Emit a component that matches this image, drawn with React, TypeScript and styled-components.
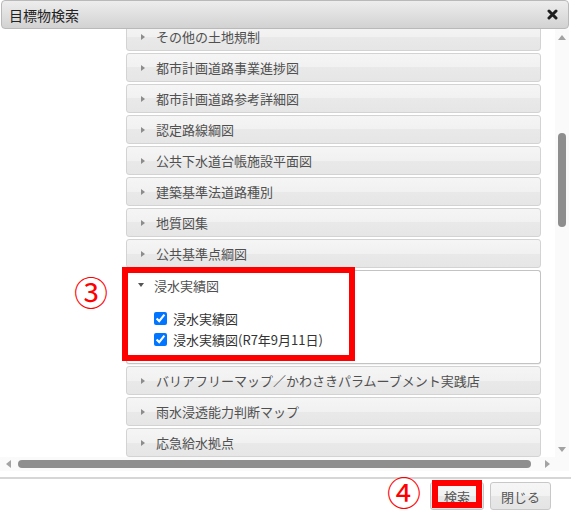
import React, { useLayoutEffect, useRef } from "react";
import styled, { createGlobalStyle } from "styled-components";

const GlobalStyle = createGlobalStyle`
  html, body { margin: 0; padding: 0; background: #fff; }
  body { font-family: "Noto Sans CJK JP", "Noto Sans", sans-serif; }
  * { box-sizing: border-box; }
`;

const Dialog = styled.div`
  position: relative;
  width: 571px;
  height: 514px;
  display: flex;
  flex-direction: column;
  background: #fff;
`;

const TitleBar = styled.div`
  height: 29px;
  margin: 0 2px 0 1px;
  padding: 0 10px 0 7px;
  display: flex;
  align-items: center;
  justify-content: space-between;
  border: 1px solid #b9b9b9;
  border-radius: 4px;
  background: linear-gradient(#ededed, #d2d2d2);
  color: #222;
  font-size: 14px;
`;

const Body = styled.div`
  display: grid;
  grid-template-columns: 555px 14px;
  grid-template-rows: 428px 14px;
`;

const Viewport = styled.div`
  overflow: hidden;
`;

const List = styled.div`
  display: flex;
  flex-direction: column;
  padding: 0 14px 2px 126px;
`;

const Item = styled.div`
  margin-top: 2px;
`;

const Header = styled.div<{ $open?: boolean }>`
  height: 29px;
  display: flex;
  align-items: center;
  gap: 10px;
  padding-left: ${(p) => (p.$open ? "10px" : "12px")};
  border: 1px solid ${(p) => (p.$open ? "#c3c3c3" : "#d3d3d3")};
  border-bottom: ${(p) => (p.$open ? "none" : "1px solid #d3d3d3")};
  border-radius: ${(p) => (p.$open ? "3px 3px 0 0" : "3px")};
  background: ${(p) =>
    p.$open
      ? "#fff"
      : "linear-gradient(#f5f5f5 0%, #f1f1f1 50%, #e9e9e9 50%, #e6e6e6 100%)"};
  color: #505050;
  font-size: 13px;
  white-space: nowrap;
`;

const Caret = styled.span<{ $open?: boolean }>`
  width: 0;
  height: 0;
  flex: none;
  margin-left: ${(p) => (p.$open ? "1px" : "2px")};
  margin-right: ${(p) => (p.$open ? "0" : "1px")};
  ${(p) =>
    p.$open
      ? `border-left: 3px solid transparent; border-right: 3px solid transparent; border-top: 4px solid #555;`
      : `border-top: 3.5px solid transparent; border-bottom: 3.5px solid transparent; border-left: 4px solid #8c8c8c;`}
`;

const Panel = styled.div`
  padding: 9px 0 13px 27px;
  border: 1px solid #c3c3c3;
  border-top: none;
  border-radius: 0 0 3px 3px;
  background: #fff;
  box-shadow: 0 1px 1px rgba(0, 0, 0, 0.06);
`;

const CheckRow = styled.label`
  height: 21px;
  display: flex;
  align-items: center;
  gap: 6px;
  color: #333;
  font-size: 13px;
  white-space: nowrap;
`;

const Check = styled.input`
  width: 13px;
  height: 13px;
  margin: 0;
  accent-color: #0075ff;
`;

const VTrack = styled.div`
  display: flex;
  flex-direction: column;
  align-items: center;
  background: #fafafa;
`;

const HTrack = styled.div`
  display: flex;
  align-items: center;
  background: #fafafa;
`;

const Corner = styled.div`
  background: #fafafa;
`;

const ArrowBox = styled.div`
  width: 16px;
  height: 16px;
  flex: none;
  display: flex;
  align-items: center;
  justify-content: center;
`;

const Arrow = styled.span<{ $dir: "up" | "down" | "left" | "right" }>`
  width: 0;
  height: 0;
  ${(p) =>
    p.$dir === "up"
      ? "border-left: 4px solid transparent; border-right: 4px solid transparent; border-bottom: 5px solid #a3a3a3;"
      : p.$dir === "down"
      ? "border-left: 4px solid transparent; border-right: 4px solid transparent; border-top: 5px solid #a3a3a3;"
      : p.$dir === "left"
      ? "border-top: 4px solid transparent; border-bottom: 4px solid transparent; border-right: 5px solid #a3a3a3;"
      : "border-top: 4px solid transparent; border-bottom: 4px solid transparent; border-left: 5px solid #a3a3a3;"}
`;

const Spacer = styled.div`
  flex: 1;
`;

const VThumb = styled.div`
  width: 8px;
  flex: none;
  border-radius: 4px;
  background: #8e8e8e;
`;

const HThumb = styled.div`
  height: 8px;
  flex: none;
  border-radius: 4px;
  background: #8e8e8e;
`;

const Footer = styled.div`
  margin-top: 6px;
  border-top: 2px solid #d6d6d6;
  padding: 3px 20px 0 0;
  display: flex;
  justify-content: flex-end;
  gap: 6px;
`;

const Button = styled.button<{ $w: number }>`
  width: ${(p) => p.$w}px;
  height: 28px;
  padding: 0;
  border: 1px solid #c8c8c8;
  border-radius: 3px;
  background: linear-gradient(#f6f6f6 0%, #f2f2f2 50%, #e8e8e8 50%, #e4e4e4 100%);
  color: #555;
  font-family: inherit;
  font-size: 13px;
`;

const RedBox = styled.div<{ $x: number; $y: number; $w: number; $h: number }>`
  position: absolute;
  left: ${(p) => p.$x}px;
  top: ${(p) => p.$y}px;
  width: ${(p) => p.$w}px;
  height: ${(p) => p.$h}px;
  border: 6px solid #ff0000;
  pointer-events: none;
`;

const Mark = styled.div<{ $x: number; $y: number }>`
  position: absolute;
  left: ${(p) => p.$x}px;
  top: ${(p) => p.$y}px;
  color: #ff0000;
  font-size: 34px;
  line-height: 1.1;
  pointer-events: none;
`;

const CloseIcon = () => (
  <svg width="11" height="11" viewBox="0 0 11 11">
    <path d="M2 2 L9 9 M9 2 L2 9" stroke="#1e1e1e" strokeWidth="3" strokeLinecap="round" />
  </svg>
);

const before = [
  "その他の土地規制",
  "都市計画道路事業進捗図",
  "都市計画道路参考詳細図",
  "認定路線綱図",
  "公共下水道台帳施設平面図",
  "建築基準法道路種別",
  "地質図集",
  "公共基準点綱図",
];

const after = [
  "バリアフリーマップ／かわさきパラムーブメント実践店",
  "雨水浸透能力判断マップ",
  "応急給水拠点",
];

const layers = ["浸水実績図", "浸水実績図(R7年9月11日)"];

const Closed = ({ label }: { label: string }) => (
  <Item>
    <Header>
      <Caret />
      {label}
    </Header>
  </Item>
);

export default function App() {
  const viewRef = useRef<HTMLDivElement>(null);

  // the list is shown scrolled a little past its first entry
  useLayoutEffect(() => {
    if (viewRef.current) viewRef.current.scrollTop = 9;
  }, []);

  return (
    <>
      <GlobalStyle />
      <Dialog>
        <TitleBar>
          <span>目標物検索</span>
          <CloseIcon />
        </TitleBar>
        <Body>
          <Viewport ref={viewRef}>
            <List>
              {before.map((t) => (
                <Closed key={t} label={t} />
              ))}
              <Item>
                <Header $open>
                  <Caret $open />
                  浸水実績図
                </Header>
                <Panel>
                  {layers.map((l) => (
                    <CheckRow key={l}>
                      <Check type="checkbox" defaultChecked />
                      {l}
                    </CheckRow>
                  ))}
                </Panel>
              </Item>
              {after.map((t) => (
                <Closed key={t} label={t} />
              ))}
            </List>
          </Viewport>
          <VTrack>
            <ArrowBox>
              <Arrow $dir="up" />
            </ArrowBox>
            <VThumb style={{ marginTop: 88, height: 94 }} />
            <Spacer />
            <ArrowBox>
              <Arrow $dir="down" />
            </ArrowBox>
          </VTrack>
          <HTrack>
            <ArrowBox>
              <Arrow $dir="left" />
            </ArrowBox>
            <HThumb style={{ marginLeft: 2, width: 513 }} />
            <Spacer />
            <ArrowBox>
              <Arrow $dir="right" />
            </ArrowBox>
          </HTrack>
          <Corner />
        </Body>
        <Footer>
          <Button $w={54}>検索</Button>
          <Button $w={61}>閉じる</Button>
        </Footer>

        <RedBox $x={122} $y={267} $w={233} $h={94} />
        <Mark $x={74} $y={273}>③</Mark>
        <RedBox $x={432} $y={480} $w={50} $h={28} />
        <Mark $x={387} $y={473}>④</Mark>
      </Dialog>
    </>
  );
}
